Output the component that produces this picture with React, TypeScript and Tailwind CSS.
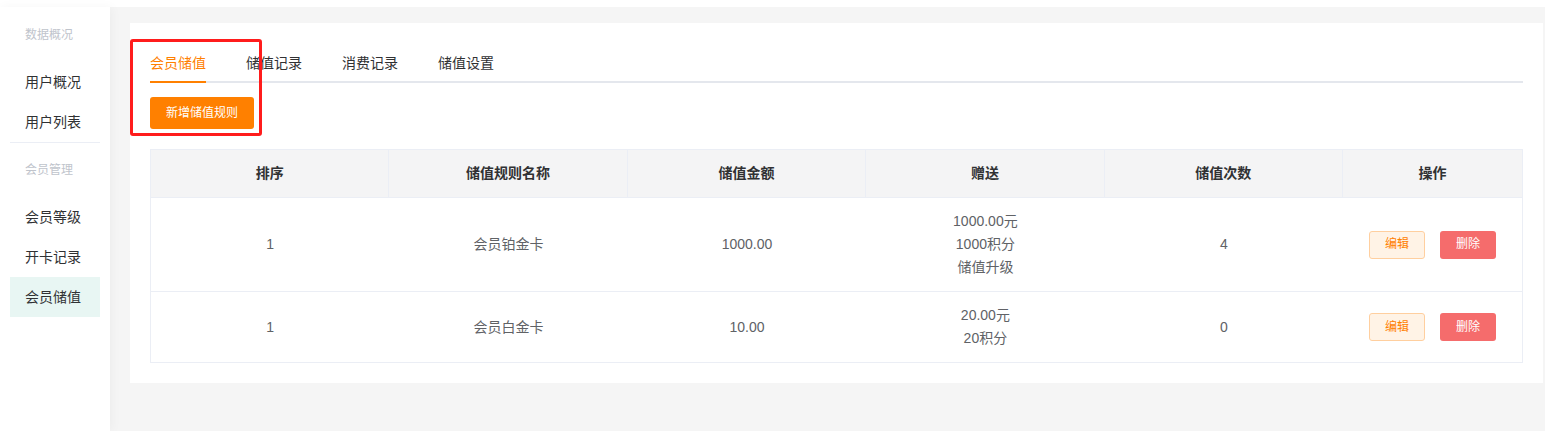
import React from "react";

const rows = [
  { sort: "1", name: "会员铂金卡", amount: "1000.00", gift: ["1000.00元", "1000积分", "储值升级"], count: "4" },
  { sort: "1", name: "会员白金卡", amount: "10.00", gift: ["20.00元", "20积分"], count: "0" },
];

const headers = ["排序", "储值规则名称", "储值金额", "赠送", "储值次数", "操作"];

function SideGroup({ label }: { label: string }) {
  return (
    <div className="h-[54px] flex items-center pl-[25px] text-[12px] text-[#c0c4cc]">{label}</div>
  );
}

function SideItem({ label, active }: { label: string; active?: boolean }) {
  return (
    <div
      className={
        "mx-[10px] h-[40px] flex items-center pl-[15px] text-[14px] text-[#303133] " +
        (active ? "bg-[#e8f6f3]" : "")
      }
    >
      {label}
    </div>
  );
}

export default function App() {
  return (
    <div className="w-[1545px] h-[431px] flex flex-col bg-white font-['Liberation_Sans','Noto_Sans_CJK_SC',sans-serif] overflow-hidden">
      <div className="h-[7px] bg-white shrink-0" />
      <div className="flex flex-1 min-h-0">
        <aside className="w-[110px] shrink-0 bg-white shadow-[2px_0_10px_rgba(0,0,0,0.04)] z-10 pt-px">
          <SideGroup label="数据概况" />
          <SideItem label="用户概况" />
          <SideItem label="用户列表" />
          <div className="mx-[10px] h-px bg-[#ebeef5]" />
          <SideGroup label="会员管理" />
          <SideItem label="会员等级" />
          <SideItem label="开卡记录" />
          <SideItem label="会员储值" active />
        </aside>
        <main className="flex-1 bg-[#f5f5f5] pt-[16px] pl-[20px] pr-[2px]">
          <div className="relative bg-white px-[20px] pt-[20px] pb-[20px]">
            {/* tabs */}
            <div className="relative flex h-[40px] items-center">
              <div className="absolute left-0 right-0 bottom-0 h-[2px] bg-[#e4e7ed]" />
              <div className="relative h-[40px] flex items-center pr-[20px] text-[14px] text-[#ff8000]">
                会员储值
                <div className="absolute left-0 right-[20px] bottom-0 h-[2px] bg-[#ff8000]" />
              </div>
              <div className="h-[40px] flex items-center px-[20px] text-[14px] text-[#303133]">储值记录</div>
              <div className="h-[40px] flex items-center px-[20px] text-[14px] text-[#303133]">消费记录</div>
              <div className="h-[40px] flex items-center px-[20px] text-[14px] text-[#303133]">储值设置</div>
            </div>
            <div className="mt-[14px]">
              <button className="h-[32px] w-[104px] rounded-[3px] bg-[#ff8000] text-white text-[12px] flex items-center justify-center">
                新增储值规则
              </button>
            </div>
            {/* table */}
            <div className="mt-[20px] border border-[#ebeef5] text-[14px]">
              <div className="grid grid-cols-[1fr_1fr_1fr_1fr_1fr_179px] bg-[#f4f4f5] border-b border-[#ebeef5]">
                {headers.map((h, i) => (
                  <div
                    key={h}
                    className={
                      "py-[12px] leading-[23px] text-center font-bold text-[#303133] " +
                      (i < 5 ? "border-r border-[#ebeef5]" : "")
                    }
                  >
                    {h}
                  </div>
                ))}
              </div>
              {rows.map((r, idx) => (
                <div
                  key={idx}
                  className={
                    "grid grid-cols-[1fr_1fr_1fr_1fr_1fr_179px] items-center text-[#606266] leading-[23px] " +
                    (idx < rows.length - 1 ? "border-b border-[#ebeef5]" : "")
                  }
                >
                  <div className="py-[12px] text-center">{r.sort}</div>
                  <div className="py-[12px] text-center">{r.name}</div>
                  <div className="py-[12px] text-center">{r.amount}</div>
                  <div className="py-[12px] text-center flex flex-col">
                    {r.gift.map((g) => (
                      <span key={g}>{g}</span>
                    ))}
                  </div>
                  <div className="py-[12px] text-center">{r.count}</div>
                  <div className="py-[12px] flex justify-center gap-[15px]">
                    <button className="w-[56px] h-[28px] rounded-[3px] border border-[#ffcf9f] bg-[#fff3e6] text-[#ff8000] text-[12px] flex items-center justify-center">
                      编辑
                    </button>
                    <button className="w-[56px] h-[28px] rounded-[3px] bg-[#f56c6c] text-white text-[12px] flex items-center justify-center">
                      删除
                    </button>
                  </div>
                </div>
              ))}
            </div>
            {/* annotation box */}
            <div className="absolute left-0 top-[16px] w-[132px] h-[97px] border-[3px] border-[#ff1c1c] rounded-[3px] pointer-events-none" />
          </div>
        </main>
      </div>
    </div>
  );
}
